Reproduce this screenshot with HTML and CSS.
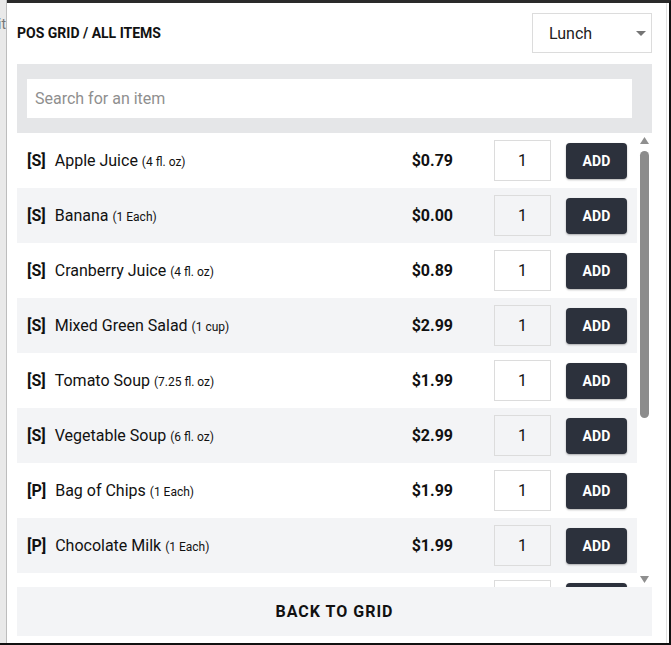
FILE: index.html
```html
<!DOCTYPE html>
<html lang="en">
<head>
<meta charset="utf-8">
<title>POS Grid</title>
<link rel="stylesheet" href="styles.css">
</head>
<body>
<div class="frame">
  <div class="backdrop"><span class="backdrop-text">Edit</span></div>
  <div class="modal">
    <div class="header">
      <h1 class="title">POS GRID / ALL ITEMS</h1>
      <div class="select">
        <span class="select-value">Lunch</span>
        <svg class="caret" width="10" height="5" viewBox="0 0 10 5"><path d="M0 0 L10 0 L5 5 Z" fill="#757575"/></svg>
      </div>
    </div>
    <div class="search">
      <input class="search-input" type="text" placeholder="Search for an item">
    </div>
    <div class="list-wrap">
      <div class="list">
        <div class="row"><span class="tag">[S]</span><span class="name">Apple Juice <small>(4 fl. oz)</small></span><span class="price">$0.79</span><span class="qty">1</span><button class="add">ADD</button></div>
        <div class="row"><span class="tag">[S]</span><span class="name">Banana <small>(1 Each)</small></span><span class="price">$0.00</span><span class="qty">1</span><button class="add">ADD</button></div>
        <div class="row"><span class="tag">[S]</span><span class="name">Cranberry Juice <small>(4 fl. oz)</small></span><span class="price">$0.89</span><span class="qty">1</span><button class="add">ADD</button></div>
        <div class="row"><span class="tag">[S]</span><span class="name">Mixed Green Salad <small>(1 cup)</small></span><span class="price">$2.99</span><span class="qty">1</span><button class="add">ADD</button></div>
        <div class="row"><span class="tag">[S]</span><span class="name">Tomato Soup <small>(7.25 fl. oz)</small></span><span class="price">$1.99</span><span class="qty">1</span><button class="add">ADD</button></div>
        <div class="row"><span class="tag">[S]</span><span class="name">Vegetable Soup <small>(6 fl. oz)</small></span><span class="price">$2.99</span><span class="qty">1</span><button class="add">ADD</button></div>
        <div class="row"><span class="tag">[P]</span><span class="name">Bag of Chips <small>(1 Each)</small></span><span class="price">$1.99</span><span class="qty">1</span><button class="add">ADD</button></div>
        <div class="row"><span class="tag">[P]</span><span class="name">Chocolate Milk <small>(1 Each)</small></span><span class="price">$1.99</span><span class="qty">1</span><button class="add">ADD</button></div>
        <div class="row"><span class="tag">[P]</span><span class="name">Fruit Cup <small>(1 Each)</small></span><span class="price">$1.49</span><span class="qty">1</span><button class="add">ADD</button></div>
      </div>
      <div class="scrollbar">
        <div class="scroll-btn">
          <svg width="9" height="7" viewBox="0 0 9 7"><path d="M0 7 L9 7 L4.5 0 Z" fill="#8f8f8f"/></svg>
        </div>
        <div class="scroll-track"><div class="scroll-thumb"></div></div>
        <div class="scroll-btn">
          <svg width="9" height="7" viewBox="0 0 9 7"><path d="M0 0 L9 0 L4.5 7 Z" fill="#8f8f8f"/></svg>
        </div>
      </div>
    </div>
    <button class="back">BACK TO GRID</button>
  </div>
</div>
</body>
</html>
```
FILE: styles.css
```css
* { box-sizing: border-box; }
html, body { margin: 0; padding: 0; }
body {
  font-family: Roboto, "Liberation Sans", Arial, sans-serif;
  color: #111;
  background: #ffffff;
  width: 671px;
  height: 645px;
  overflow: hidden;
}
.frame {
  display: flex;
  width: 671px;
  height: 645px;
  border-bottom: 2px solid #111;
}
.backdrop {
  width: 7px;
  flex: none;
  background: #e9e9e9;
  border-right: 1px solid #bdbdbd;
  overflow: hidden;
  display: flex;
  justify-content: flex-end;
  padding-top: 16px;
}
.backdrop-text {
  font-size: 14px;
  color: #777;
  white-space: nowrap;
  line-height: 16px;
  height: 16px;
}
.modal {
  flex: 1;
  display: flex;
  flex-direction: column;
  background: #fff;
  border-top: 3px solid #2a2a2a;
  border-right: 2px solid #111;
  padding: 10px 17px 7px 10px;
  box-shadow: inset -2px 0 0 #fff, inset -3px 0 0 #e2e2e2;
}
.header {
  display: flex;
  align-items: center;
  justify-content: space-between;
  height: 40px;
  margin-bottom: 11px;
  flex: none;
}
.title {
  margin: 0;
  font-size: 14px;
  font-weight: 700;
  color: #111;
}
.select {
  width: 120px;
  height: 40px;
  border: 1px solid #dcdcdc;
  display: flex;
  align-items: center;
  justify-content: space-between;
  padding: 0 5px 0 16px;
  font-size: 16px;
  color: #222;
}
.caret { display: block; }
.search {
  flex: none;
  background: #e5e6e8;
  padding: 15px 20px 15px 10px;
}
.search-input {
  display: block;
  width: 100%;
  height: 39px;
  border: none;
  outline: none;
  background: #fff;
  padding: 0 8px;
  font-family: Roboto, "Liberation Sans", Arial, sans-serif;
  font-size: 16px;
  color: #222;
}
.search-input::placeholder { color: #8f8f8f; }
.list-wrap {
  flex: none;
  height: 454px;
  display: flex;
}
.list {
  flex: 1;
  overflow: hidden;
}
.scrollbar {
  width: 15px;
  flex: none;
  display: flex;
  flex-direction: column;
  background: #fff;
}
.scroll-btn {
  height: 15px;
  flex: none;
  display: flex;
  align-items: center;
  justify-content: center;
}
.scroll-btn svg { display: block; }
.scroll-track {
  flex: 1;
  padding: 3px 3px 0 3px;
}
.scroll-thumb {
  height: 267px;
  background: #8c8c8c;
  border-radius: 5px;
}
.row {
  display: flex;
  align-items: center;
  height: 55px;
  padding: 0 10px;
  background: #fff;
}
.row:nth-child(even) { background: #f3f4f6; }
.tag {
  font-weight: 700;
  font-size: 16px;
  margin-right: 9px;
}
.name {
  flex: 1;
  font-size: 16px;
  white-space: nowrap;
}
.name small { font-size: 12px; }
.price {
  font-weight: 700;
  font-size: 16px;
  width: 90px;
  text-align: right;
  margin-right: 41px;
}
.qty {
  width: 57px;
  height: 41px;
  border: 1px solid #dcdcdc;
  display: flex;
  align-items: center;
  justify-content: center;
  font-size: 16px;
  margin-right: 15px;
}
.add {
  width: 61px;
  height: 36px;
  border: none;
  border-radius: 4px;
  background: #2c313c;
  color: #fff;
  font-family: Roboto, "Liberation Sans", Arial, sans-serif;
  font-weight: 700;
  font-size: 14px;
  letter-spacing: 0.2px;
  box-shadow: 0 1px 2px rgba(0,0,0,0.3);
  padding: 0;
}
.back {
  flex: none;
  height: 49px;
  width: 100%;
  border: none;
  background: #f3f4f6;
  font-family: Roboto, "Liberation Sans", Arial, sans-serif;
  font-weight: 700;
  font-size: 16px;
  letter-spacing: 1px;
  color: #111;
  padding: 0;
}
```
